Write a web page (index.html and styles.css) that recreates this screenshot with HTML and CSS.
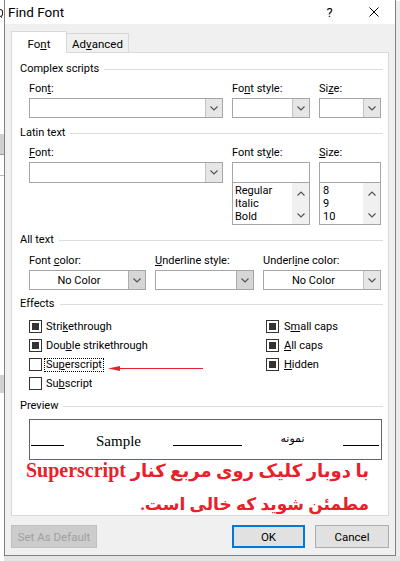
FILE: index.html
```html
<!DOCTYPE html>
<html lang="en">
<head>
<meta charset="utf-8">
<title>Find Font</title>
<link rel="stylesheet" href="styles.css">
</head>
<body>
<div class="desk">
  <div class="bg-left">
    <div class="bg-top"><span class="bg-mark"></span></div>
    <div class="bg-band"></div>
    <div class="bg-gap"></div>
    <div class="bg-band2"></div>
  </div>

  <div class="dialog">
    <div class="titlebar">
      <span class="title">Find Font</span>
      <span class="help">?</span>
      <svg class="close" viewBox="0 0 10 10"><path d="M0.5 0.5 L9.5 9.5 M9.5 0.5 L0.5 9.5"/></svg>
    </div>

    <div class="body">
      <div class="tabs">
        <div class="tab active">Fo<u>n</u>t</div>
        <div class="tab">Ad<u>v</u>anced</div>
      </div>

      <div class="panel">
        <div class="gtitle">Complex scripts</div>
        <div class="row3">
          <div class="field"><div class="lbl">Fon<u>t</u>:</div>
            <div class="combo"><span class="ctext"></span><span class="drop"><svg class="chev" viewBox="0 0 8 5"><path d="M0.5 0.5 L4 4 L7.5 0.5"/></svg></span></div></div>
          <div class="field"><div class="lbl">Fo<u>n</u>t style:</div>
            <div class="combo"><span class="ctext"></span><span class="drop"><svg class="chev" viewBox="0 0 8 5"><path d="M0.5 0.5 L4 4 L7.5 0.5"/></svg></span></div></div>
          <div class="field"><div class="lbl">Si<u>z</u>e:</div>
            <div class="combo"><span class="ctext"></span><span class="drop"><svg class="chev" viewBox="0 0 8 5"><path d="M0.5 0.5 L4 4 L7.5 0.5"/></svg></span></div></div>
        </div>

        <div class="gtitle g-latin">Latin text</div>
        <div class="row3 latin">
          <div class="field"><div class="lbl"><u>F</u>ont:</div>
            <div class="combo tall"><span class="ctext"></span><span class="drop"><svg class="chev" viewBox="0 0 8 5"><path d="M0.5 0.5 L4 4 L7.5 0.5"/></svg></span></div></div>
          <div class="field"><div class="lbl">Font st<u>y</u>le:</div>
            <div class="tbox"></div>
            <div class="list">
              <div class="items"><div>Regular</div><div>Italic</div><div>Bold</div></div>
              <div class="sbar"><svg class="chev" viewBox="0 0 8 5"><path d="M0.5 4.5 L4 1 L7.5 4.5"/></svg><svg class="chev" viewBox="0 0 8 5"><path d="M0.5 0.5 L4 4 L7.5 0.5"/></svg></div>
            </div></div>
          <div class="field"><div class="lbl"><u>S</u>ize:</div>
            <div class="tbox"></div>
            <div class="list">
              <div class="items size"><div>8</div><div>9</div><div>10</div></div>
              <div class="sbar"><svg class="chev" viewBox="0 0 8 5"><path d="M0.5 4.5 L4 1 L7.5 4.5"/></svg><svg class="chev" viewBox="0 0 8 5"><path d="M0.5 0.5 L4 4 L7.5 0.5"/></svg></div>
            </div></div>
        </div>

        <div class="gtitle g-all">All text</div>
        <div class="row3 alltext">
          <div class="field"><div class="lbl">Font <u>c</u>olor:</div>
            <div class="combo"><span class="ctext">No Color</span><span class="drop dark"><svg class="chev" viewBox="0 0 8 5"><path d="M0.5 0.5 L4 4 L7.5 0.5"/></svg></span></div></div>
          <div class="field"><div class="lbl"><u>U</u>nderline style:</div>
            <div class="combo"><span class="ctext"></span><span class="drop dark"><svg class="chev" viewBox="0 0 8 5"><path d="M0.5 0.5 L4 4 L7.5 0.5"/></svg></span></div></div>
          <div class="field"><div class="lbl">Underl<u>i</u>ne color:</div>
            <div class="combo"><span class="ctext">No Color</span><span class="drop"><svg class="chev" viewBox="0 0 8 5"><path d="M0.5 0.5 L4 4 L7.5 0.5"/></svg></span></div></div>
        </div>

        <div class="gtitle g-eff">Effects</div>
        <div class="effects">
          <div class="col">
            <div class="cb"><span class="box on"></span><span class="cbl">Stri<u>k</u>ethrough</span></div>
            <div class="cb"><span class="box on"></span><span class="cbl">Dou<u>b</u>le strikethrough</span></div>
            <div class="cb"><span class="box"></span><span class="cbl focus">Su<u>p</u>erscript</span></div>
            <div class="cb"><span class="box"></span><span class="cbl">Su<u>b</u>script</span></div>
          </div>
          <div class="col">
            <div class="cb"><span class="box on"></span><span class="cbl">S<u>m</u>all caps</span></div>
            <div class="cb"><span class="box on"></span><span class="cbl"><u>A</u>ll caps</span></div>
            <div class="cb"><span class="box on"></span><span class="cbl"><u>H</u>idden</span></div>
          </div>
        </div>

        <div class="gtitle g-prev">Preview</div>
        <div class="preview">
          <span class="seg s1"></span>
          <span class="ptext latin-s">Sample</span>
          <span class="seg s2"></span>
          <span class="ptext fa" lang="fa" dir="rtl">نمونه</span>
          <span class="seg s3"></span>
        </div>

        <div class="note" dir="rtl" lang="fa">
          <div><span class="fa-t1">با دوبار کلیک روی مربع کنار</span> <span class="en-t">Superscript</span></div>
          <div class="fa-t2">مطمئن شوید که خالی است.</div>
        </div>

        <svg class="arrow" viewBox="0 0 96 9"><path class="ahead" d="M0 4.5 L12 2 L12 7 Z"/><path class="aline" d="M10 4.5 L95 4.5"/></svg>
      </div>

      <div class="buttons">
        <div class="btn disabled">Set As Default</div>
        <div class="btn ok">OK</div>
        <div class="btn">Cancel</div>
      </div>
    </div>
  </div>

  <div class="bg-right"></div>
</div>
</body>
</html>
```

FILE: styles.css
```css
* { box-sizing: border-box; }
html, body { margin: 0; padding: 0; }
body {
  width: 400px; height: 561px; overflow: hidden;
  background: #e4e4e4;
  font-family: Roboto, "Noto Sans", "DejaVu Sans", sans-serif;
  font-size: 11px; color: #000;
}
u { text-decoration: underline; text-underline-offset: 1px; }

.desk { display: flex; height: 561px; align-items: flex-start; }

/* background document peeking at the edges */
.bg-left { width: 4px; height: 561px; background: #fff; display: flex; flex-direction: column; overflow: hidden; }
.bg-top { height: 134px; padding-top: 9px; }
.bg-mark { display: block; width: 3px; height: 8px; border: 1px solid #222; border-left: none; border-radius: 0 3px 3px 0; box-shadow: 0 2px 0 -1px #222; }
.bg-band { height: 21px; background: #d0d0d0; border-bottom: 1px solid #9a9a9a; }
.bg-gap { height: 200px; border-top: 1px solid #bdbdbd; margin-top: 20px; }
.bg-band2 { height: 18px; background: #d2d2d2; }
.bg-right { width: 4px; height: 556px; background: #ececec; border-top: 1px solid #fff; }

/* dialog window */
.dialog {
  width: 392px; height: 556px;
  border: 1px solid #808080; border-top: none;
  background: #f0f0f0;
  display: flex; flex-direction: column;
}
.titlebar { height: 24px; background: #fff; display: flex; align-items: center; padding: 0 16px 0 3px; }
.title { flex: 1; font-size: 13.5px; }
.help { width: 7px; text-align: center; font-size: 13px; margin-right: 36px; }
.close { width: 10px; height: 10px; }
.close path { stroke: #000; stroke-width: 1; fill: none; }

.body { padding: 0 6px 7px; display: flex; flex-direction: column; }

/* tabs */
.tabs { height: 29px; margin-bottom: -1px; display: flex; align-items: flex-end; position: relative; z-index: 1; font-size: 11.5px; }
.tab {
  height: 19px; width: 63px; margin-bottom: 1px; margin-left: -1px;
  border: 1px solid #d9d9d9; border-bottom: none; background: #f0f0f0;
  display: flex; align-items: center; justify-content: center; padding-top: 1px;
}
.tab.active { height: 22px; width: 56px; margin: 0; background: #fff; position: relative; z-index: 2; padding-top: 2px; }

/* panel */
.panel {
  height: 464px; background: #fff; border: 1px solid #d9d9d9;
  padding: 9px 5px 0 8px; position: relative;
}
.gtitle { height: 14px; line-height: 14px; display: flex; align-items: center; gap: 5px; white-space: nowrap; }
.gtitle::after { content: ""; flex: 1; height: 1px; background: #dcdcdc; }
.g-latin, .g-all { margin-top: 8px; }
.g-eff { margin-top: 7px; }
.g-prev { margin-top: 6px; }

.row3 { display: grid; grid-template-columns: 194px 78px 62px; column-gap: 9px; margin-left: 9px; margin-top: 6px; }
.row3.alltext { grid-template-columns: 117px 99px 118px; margin-top: 7px; }
.lbl { height: 14px; line-height: 14px; margin-bottom: 2px; white-space: nowrap; }

.combo { height: 20px; border: 1px solid #a6a6a6; background: #fff; display: flex; }
.combo.tall { height: 21px; }
.ctext { flex: 1; display: flex; align-items: center; justify-content: center; padding-top: 1px; }
.drop { width: 17px; background: #e6e6e6; border-left: 1px solid #c4c4c4; display: flex; align-items: center; justify-content: center; }
.drop.dark { background: #d6d6d6; border-left-color: #adadad; }
.chev { width: 8px; height: 5px; display: block; }
.chev path { stroke: #505050; stroke-width: 1.1; fill: none; }

.tbox { height: 21px; border: 1px solid #a6a6a6; background: #fff; }
.list { height: 43px; margin-top: -1px; border: 1px solid #a6a6a6; background: #fff; display: flex; overflow: hidden; }
.items { flex: 1; padding: 1px 0 0 2px; line-height: 13px; }
.items.size { padding-left: 3px; }
.sbar { width: 17px; background: #f0f0f0; display: flex; flex-direction: column; align-items: center; justify-content: space-between; padding: 8px 0 6px; }

/* effects */
.effects { display: grid; grid-template-columns: 237px 1fr; margin: 6px 0 0 9px; }
.cb { height: 19px; display: flex; align-items: center; }
.box { width: 13px; height: 13px; border: 1px solid #333; background: #fff; margin-right: 3px; padding: 2px; flex: none; }
.box.on::before { content: ""; display: block; width: 7px; height: 7px; background: #333; }
.col:last-child .box { margin-right: 4px; }
.cbl { line-height: 12px; padding: 0 1px; border: 1px solid transparent; margin-left: -1px; }
.cbl.focus { border: 1px dotted #000; }

/* preview */
.preview {
  height: 41px; margin: 6px 1px 0 9px;
  border: 1px solid #646464; background: #fff;
  display: flex; align-items: flex-end; padding: 0 0 13px 1px;
}
.seg { height: 1px; background: #000; flex: none; }
.s1 { width: 33px; }
.s2 { width: 69px; }
.s3 { width: 36px; }
.ptext { flex: none; text-align: center; line-height: 15px; margin-bottom: -3px; }
.latin-s { width: 109px; font-family: "Liberation Serif", serif; font-size: 15px; }
.fa { width: 101px; font-family: "DejaVu Sans", "Noto Sans", sans-serif; font-size: 11px; margin-bottom: 0; }

/* red annotation */
.note {
  margin: -7px 14px 0 0;
  color: #e8202a; font-weight: bold;
  font-family: "Liberation Serif", "DejaVu Sans", serif;
  font-size: 19px; line-height: 34px; text-align: right; white-space: nowrap;
}
.en-t { font-size: 20px; }
.fa-t1 { font-size: 18px; }
.fa-t2 { font-size: 17px; }

.arrow { position: absolute; left: 96px; top: 311px; width: 96px; height: 9px; }
.ahead { fill: #e8202a; }
.aline { stroke: #e8202a; stroke-width: 1.2; fill: none; }

/* buttons */
.buttons { display: flex; margin-top: 9px; gap: 10px; font-size: 11.5px; }
.btn {
  height: 23px; width: 74px; border: 1px solid #adadad; background: #e1e1e1;
  display: flex; align-items: center; justify-content: center;
}
.btn.disabled { width: 86px; margin-right: auto; background: #cccccc; border-color: #bfbfbf; color: #a0a0a0; }
.btn.ok { width: 73px; border-color: #0078d7; box-shadow: inset 0 0 0 1px #0078d7; }
```
